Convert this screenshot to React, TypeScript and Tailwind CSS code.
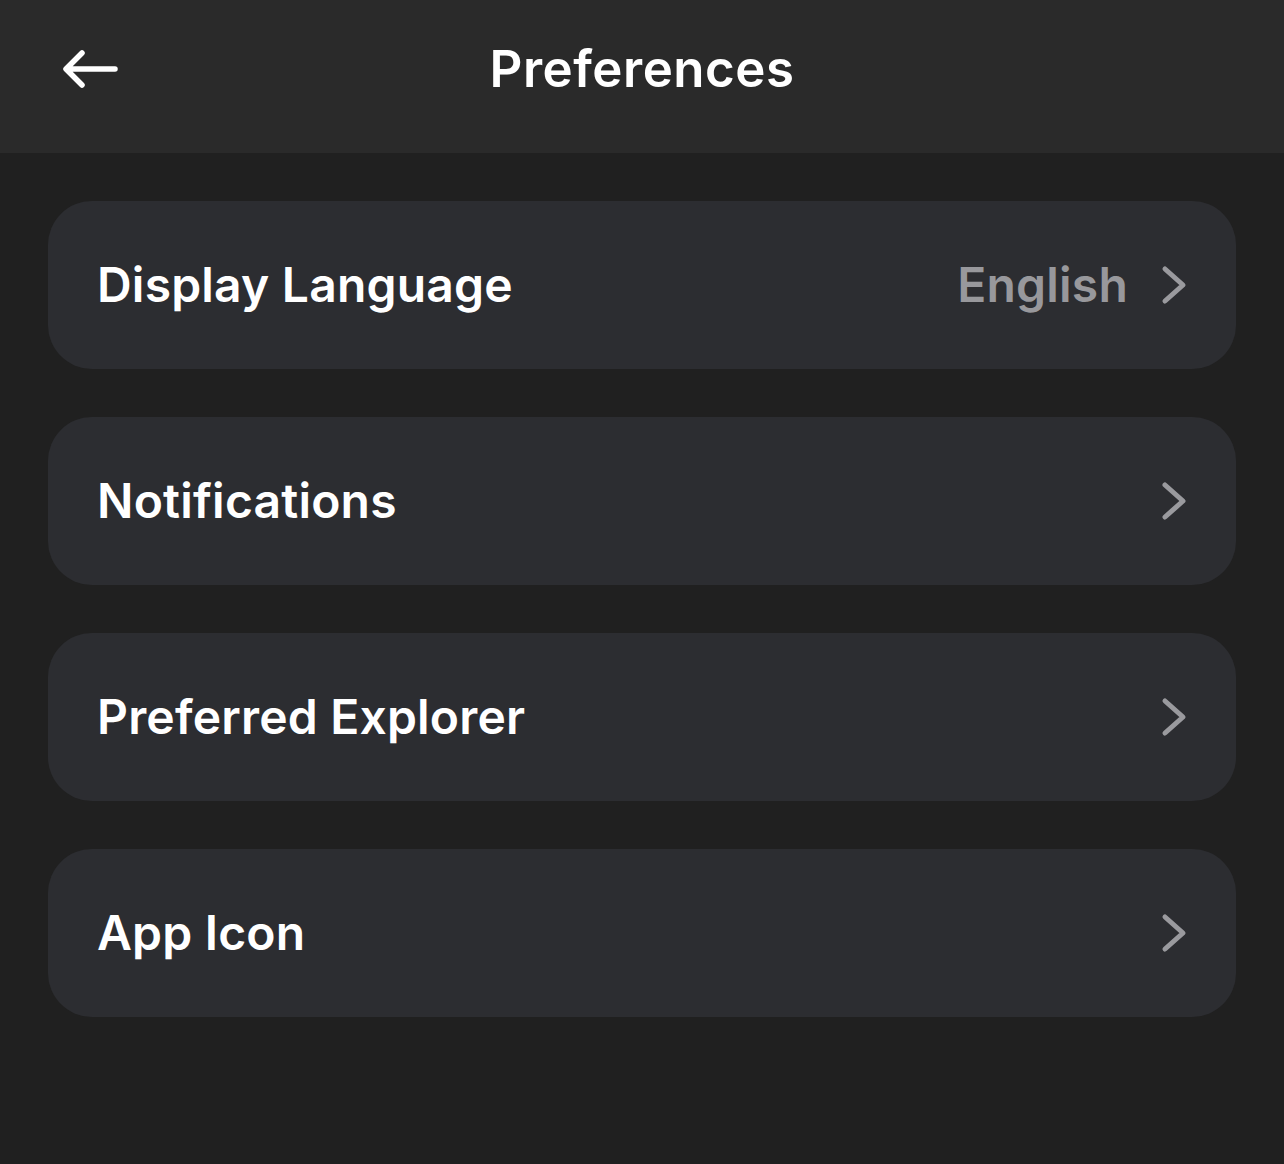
import { ReactNode } from 'react';

const rows: { label: string; value?: string }[] = [
  { label: 'Display Language', value: 'English' },
  { label: 'Notifications' },
  { label: 'Preferred Explorer' },
  { label: 'App Icon' },
];

function Chevron() {
  return (
    <svg width="30" height="42" viewBox="0 0 30 42" fill="none" className="shrink-0">
      <path d="M5 5 L23 21 L5 37" stroke="#9a9a9e" strokeWidth="5" strokeLinecap="round" strokeLinejoin="round" />
    </svg>
  );
}

function Row({ label, value }: { label: string; value?: string }) {
  return (
    <div className="flex h-[168px] items-center rounded-[44px] bg-[#2c2d31] pl-[49px] pr-[46px]">
      <span className="flex-1 text-[48px] font-semibold tracking-[0.2px] text-white">{label}</span>
      {value && <span className="mr-[32px] text-[48px] font-semibold tracking-[0.2px] text-[#98989c]">{value}</span>}
      <Chevron />
    </div>
  );
}

function Header({ children }: { children: ReactNode }) {
  return (
    <div className="relative flex h-[153px] items-center justify-center bg-[#2a2a2a] pb-[14px]">
      <button className="absolute left-[61px] top-[47px]">
        <svg width="58" height="44" viewBox="0 0 58 44" fill="none">
          <path d="M54 22 H6 M21 6 L5 22 L21 38" stroke="white" strokeWidth="5.5" strokeLinecap="round" strokeLinejoin="round" />
        </svg>
      </button>
      <h1 className="text-[51px] font-semibold tracking-[0.5px] text-white">{children}</h1>
    </div>
  );
}

export default function App() {
  return (
    <div className="h-[1164px] w-[1284px] bg-[#202020]" style={{ fontFamily: 'Inter, "Noto Sans", sans-serif' }}>
      <Header>Preferences</Header>
      <div className="flex flex-col gap-12 px-12 pt-12">
        {rows.map((r) => (
          <Row key={r.label} label={r.label} value={r.value} />
        ))}
      </div>
    </div>
  );
}
